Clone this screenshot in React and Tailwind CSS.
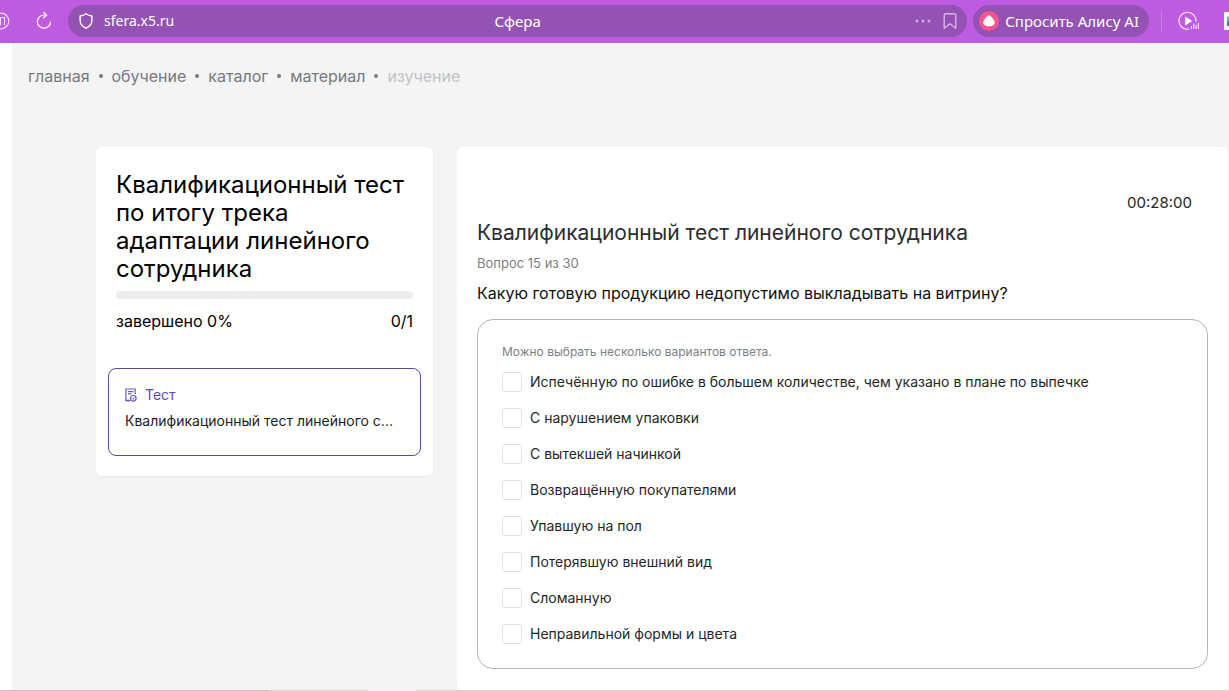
import React, { useState } from 'react';

const crumbs = ['главная', 'обучение', 'каталог', 'материал'];

const answers = [
    'Испечённую по ошибке в большем количестве, чем указано в плане по выпечке',
    'С нарушением упаковки',
    'С вытекшей начинкой',
    'Возвращённую покупателями',
    'Упавшую на пол',
    'Потерявшую внешний вид',
    'Сломанную',
    'Неправильной формы и цвета',
];

const BrowserBar = () => (
    <header className="flex h-[43px] shrink-0 items-center overflow-hidden border-b border-[#b565cf] bg-[#bd5ce0] font-['Noto_Sans',sans-serif] text-[15px] text-white">
        <button aria-label="Вкладки" className="-ml-2 shrink-0">
            <svg width="18" height="18" viewBox="0 0 18 18" fill="none" stroke="#f3d9fb" strokeWidth="1.2">
                <circle cx="9" cy="9" r="7.8" />
                <path d="M8.500 5.500h4v8M8.500 5.500v8" />
            </svg>
        </button>
        <button aria-label="Обновить" className="ml-6 shrink-0">
            <svg width="20" height="20" viewBox="0 0 20 20" fill="none" stroke="#f9e8fd" strokeWidth="1.4">
                <path d="M12.2 4.1H10a6.6 6.6 0 1 0 6.6 6.6" />
                <path d="M9.3 1l3.2 3.1-3.2 3.1" />
            </svg>
        </button>
        <div className="ml-3.5 grid h-8 flex-1 grid-cols-3 items-center rounded-full bg-[#9453b4] px-2.5">
            <div className="flex items-center gap-2.5">
                <svg width="16" height="18" viewBox="0 0 16 18" fill="none" stroke="#ffffff" strokeWidth="1.4" strokeLinejoin="round">
                    <path d="M8 1.8c1.6 1.3 3.6 2 5.9 2.2v4.2c0 3.7-2.2 6.3-5.9 8-3.7-1.7-5.900-4.300-5.900-8V4C4.400 3.800 6.400 3.100 8 1.800z" />
                </svg>
                <span className="text-sm">sfera.x5.ru</span>
            </div>
            <div className="text-center">Сфера</div>
            <div className="flex items-center justify-end gap-3">
                <button aria-label="Ещё">
                    <svg width="16" height="4" viewBox="0 0 16 4" fill="#d3a6e6">
                        <circle cx="2" cy="2" r="1.500" />
                        <circle cx="8" cy="2" r="1.500" />
                        <circle cx="14" cy="2" r="1.500" />
                    </svg>
                </button>
                <button aria-label="В закладки">
                    <svg width="14" height="18" viewBox="0 0 14 18" fill="none" stroke="#d9b3ea" strokeWidth="1.400" strokeLinejoin="round">
                        <path d="M1.200 3.200a1.500 1.500 0 0 1 1.500-1.500h8.600a1.500 1.500 0 0 1 1.500 1.500v13L7 11.800l-5.800 4.400z" />
                    </svg>
                </button>
            </div>
        </div>
        <button className="ml-1.5 flex h-8 shrink-0 items-center gap-1.5 rounded-full bg-[#9453b4] pr-2.5 pl-1.5">
            <svg width="20" height="20" viewBox="0 0 20 20">
                <circle cx="10" cy="10" r="10" fill="#f5558c" />
                <path d="M10 4.200c1.800 0 5.800 5.400 5.800 7.400 0 2.300-2.700 3.700-5.800 3.700s-5.800-1.400-5.800-3.700c0-2 4-7.400 5.800-7.400z" fill="#ffffff" />
            </svg>
            Спросить Алису AI
        </button>
        <span className="mr-4 ml-3 h-5 w-px shrink-0 bg-[#ca80e6]" />
        <button aria-label="Слушать" className="shrink-0">
            <svg width="22" height="20" viewBox="0 0 22 20" fill="none" stroke="#f6e0fc" strokeWidth="1.200">
                <path d="M11.500 18a8.500 8.500 0 1 1 6.400-7.200" />
                <path d="M7.200 5.400l7 4.600-7 4.600z" fill="#ffffff" stroke="none" />
                <path d="M13.500 15v3M15.800 12.500V18M18.100 14v4M20.400 12v6" />
            </svg>
        </button>
        <div className="ml-6 w-[5px] shrink-0 overflow-hidden">
            <svg width="18" height="18" viewBox="0 0 18 18">
                <path d="M0 0h18v18H0z" fill="#f4f6fb" />
                <path d="M3 5h12v9H3z" fill="#2a7fc4" />
                <path d="M3 5l5-1v3l-5 3z" fill="#45bde0" />
            </svg>
        </div>
    </header>
);

const Breadcrumbs = () => (
    <nav className="flex items-center text-base leading-6 text-[#757a80]">
        {crumbs.map((name) => (
            <React.Fragment key={name}>
                <a href="#">{name}</a>
                <span className="mx-[9px] size-1 rounded-full bg-[#757a80]" />
            </React.Fragment>
        ))}
        <span className="text-[#c0c3c6]">изучение</span>
    </nav>
);

const TrackCard = () => (
    <aside className="w-[337px] shrink-0 rounded-md bg-white px-3 pt-6 pb-5 shadow-xs">
        <div className="px-2">
            <h1 className="text-2xl leading-7 text-black">
                Квалификационный тест по итогу трека адаптации линейного сотрудника
            </h1>
            <div className="mt-2 h-2 rounded-full bg-[#eeeeee]" />
            <div className="mt-2.5 flex justify-between text-base leading-6 text-black">
                <span>завершено 0%</span>
                <span>0/1</span>
            </div>
        </div>
        <a href="#" className="mt-[35px] block rounded-lg border border-[#574a9c] px-4 pt-4 pb-[22px]">
            <span className="flex items-center gap-2 text-sm leading-5 text-[#5b4ba8]">
                <svg width="12" height="14" viewBox="0 0 12 14" fill="none" stroke="#6a5bb8" strokeWidth="1.200">
                    <path d="M10.200 6V1H.9v11.400h4.500" />
                    <path d="M3 3.600h5.400M3 5.900h3.600" />
                    <path d="M.6 12.800h4" />
                    <circle cx="8.300" cy="10.300" r="2.800" />
                    <path d="M7 10.300l1 1 1.700-1.900" strokeWidth="1" />
                </svg>
                Тест
            </span>
            <span className="mt-1 block text-sm leading-6 whitespace-nowrap text-[#1c1c1e]">Квалификационный тест линейного с...</span>
        </a>
    </aside>
);

const QuestionCard = () => {
    const [checked, setChecked] = useState([]);

    const toggle = (i) => {
        setChecked(checked.includes(i) ? checked.filter((c) => c !== i) : [...checked, i]);
    };

    return (
        <main className="min-w-0 flex-1 self-stretch rounded-md bg-white px-5 pt-11">
            <div className="pr-4 text-right text-[15px] leading-6 text-[#242424]">00:28:00</div>
            <h2 className="mt-1 text-[21px] leading-7 text-[#2b2d30]">Квалификационный тест линейного сотрудника</h2>
            <p className="mt-2 text-[13px] leading-4 text-[#7b7f85]">Вопрос 15 из 30</p>
            <fieldset className="mt-2.5">
                <legend className="text-base leading-6 text-[#101010]">
                    Какую готовую продукцию недопустимо выкладывать на витрину?
                </legend>
                <div className="mt-3.5 rounded-2xl border border-[#b4b5b8] p-6">
                    <p className="text-xs leading-4 text-[#7b7f85]">Можно выбрать несколько вариантов ответа.</p>
                    <div className="mt-3 space-y-4">
                        {answers.map((text, i) => (
                            <label key={text} className="flex items-center gap-2 text-sm leading-5 text-[#242628]">
                                <input
                                    type="checkbox"
                                    checked={checked.includes(i)}
                                    onChange={() => toggle(i)}
                                    className="size-5 shrink-0 appearance-none rounded-sm border border-[#dedfe2] bg-white checked:bg-[#5b4ba8]"
                                />
                                {text}
                            </label>
                        ))}
                    </div>
                </div>
            </fieldset>
        </main>
    );
};

const App = () => (
    <div className="flex h-screen flex-col overflow-hidden bg-white font-['Inter',sans-serif]">
        <BrowserBar />
        <div className="ml-3 flex min-h-0 flex-1 flex-col bg-[#f4f4f4] pt-[21px] pr-px pl-4">
            <Breadcrumbs />
            <div className="mt-[59px] flex flex-1 items-start gap-6 pl-[68px]">
                <TrackCard />
                <QuestionCard />
            </div>
        </div>
        <div className="flex h-px shrink-0">
            <div className="w-[268px] bg-[#c4c4c4]" />
            <div className="w-[100px] bg-[#cddccb]" />
            <div className="w-12 bg-[#f4f4f4]" />
            <div className="flex-1 bg-[#cddccb]" />
        </div>
    </div>
);

export default App;
